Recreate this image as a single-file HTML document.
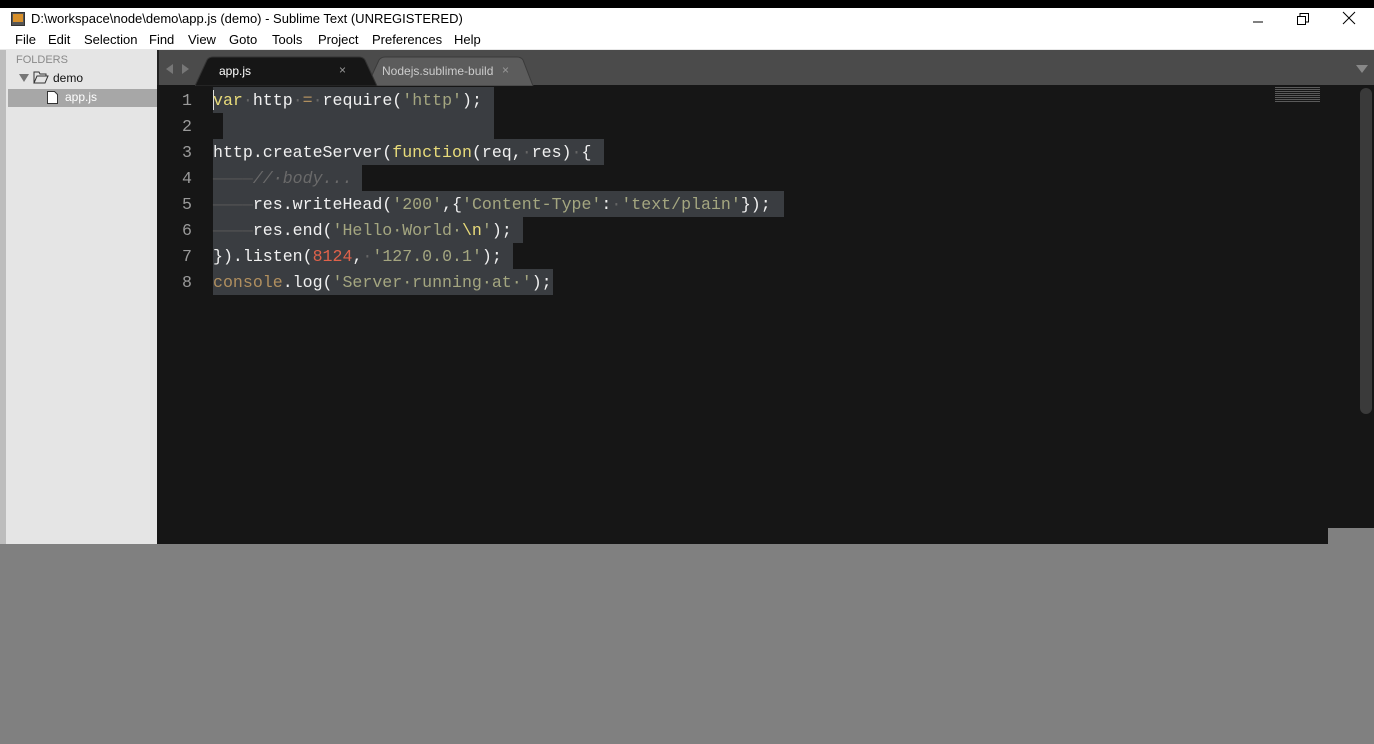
<!DOCTYPE html>
<html><head><meta charset="utf-8"><style>
*{margin:0;padding:0;box-sizing:border-box}
body{width:1374px;height:744px;background:#808080;position:relative;overflow:hidden;font-family:"Liberation Sans",sans-serif}
.abs{position:absolute}
#top{left:0;top:0;width:1374px;height:8px;background:#000}
#title{left:0;top:8px;width:1374px;height:22px;background:#fff;font-size:13px;color:#000;line-height:22px}
#menu{left:0;top:30px;width:1374px;height:20px;background:#fff;font-size:13px;line-height:20px;border-bottom:1px solid #e8e8e8}
#menu span{position:absolute;top:0}
#side{left:0;top:50px;width:157px;height:494px;background:#e5e5e5}
#strip{left:0;top:50px;width:6px;height:494px;background:#bdbdbd}
#ed{left:157px;top:50px;width:1217px;height:494px;background:#161616}
#tabbar{left:157px;top:50px;width:1217px;height:35px;background:#4b4b4b;border-left:2px solid #222}
.code{font-family:"Liberation Mono",monospace;font-size:16.6px;color:#f0f0f0;white-space:pre;line-height:26px}
.ln{color:#9a9a9a;width:40px;text-align:right;left:152px}
.sel{background:#3a3d41;height:26px}
.s{color:#a4a680}.k{color:#e8db7a}.n{color:#e0624a}.c{color:#6a6a6a;font-style:italic}.o{color:#b08f5f}.d{color:#666}.ig{color:#555}
</style></head><body>
<div id="top" class="abs"></div>
<div id="title" class="abs">
 <svg class="abs" style="left:11px;top:4px" width="14" height="14"><rect x="0.5" y="0.5" width="13" height="13" fill="#555" stroke="#333"/><rect x="2" y="2" width="10" height="8" fill="#d8902a"/></svg>
 <span class="abs" style="left:31px">D:\workspace\node\demo\app.js (demo) - Sublime Text (UNREGISTERED)</span>
 <svg class="abs" style="left:1252px;top:4px" width="12" height="14"><line x1="1" y1="10" x2="11" y2="10" stroke="#000"/></svg>
 <svg class="abs" style="left:1296px;top:4px" width="14" height="14"><rect x="1.5" y="4.5" width="8" height="8" fill="none" stroke="#000"/><path d="M4 4V1.5h8.5V10H10" fill="none" stroke="#000"/></svg>
 <svg class="abs" style="left:1342px;top:3px" width="14" height="14"><path d="M1 1L13 13M13 1L1 13" stroke="#000"/></svg>
</div>
<div id="menu" class="abs">
 <span style="left:15px">File</span><span style="left:48px">Edit</span><span style="left:84px">Selection</span><span style="left:149px">Find</span><span style="left:188px">View</span><span style="left:229px">Goto</span><span style="left:272px">Tools</span><span style="left:318px">Project</span><span style="left:372px">Preferences</span><span style="left:454px">Help</span>
</div>
<div id="side" class="abs"></div>
<div id="strip" class="abs"></div>
<div class="abs" style="left:16px;top:54px;font-size:11px;color:#8a8a8a">FOLDERS</div>
<div class="abs" style="left:19px;top:74px;width:0;height:0;border-left:5px solid transparent;border-right:5px solid transparent;border-top:8px solid #777"></div>
<svg class="abs" style="left:33px;top:71px" width="16" height="13"><path d="M1 1h5l1 2h6v2H4L1 12zM1 12l3-7h11l-3 7z" fill="none" stroke="#333"/></svg>
<div class="abs" style="left:53px;top:71px;font-size:12px;color:#111">demo</div>
<div class="abs" style="left:8px;top:89px;width:149px;height:18px;background:#a7a7a7"></div>
<svg class="abs" style="left:47px;top:91px" width="11" height="13"><path d="M0.5 0.5h7l3 3v9h-10z" fill="#fff" stroke="#333"/></svg>
<div class="abs" style="left:65px;top:90px;font-size:12px;color:#fff">app.js</div>
<div id="ed" class="abs"></div>
<div id="tabbar" class="abs"></div>
<div class="abs" style="left:166px;top:64px;width:0;height:0;border-top:5px solid transparent;border-bottom:5px solid transparent;border-right:7px solid #777"></div>
<div class="abs" style="left:182px;top:64px;width:0;height:0;border-top:5px solid transparent;border-bottom:5px solid transparent;border-left:7px solid #777"></div>
<div class="abs" style="left:1356px;top:65px;width:0;height:0;border-left:6px solid transparent;border-right:6px solid transparent;border-top:8px solid #888"></div>
<svg class="abs" style="left:195px;top:56px" width="340" height="30">
 <path d="M172 30L184 4Q186 1 190 1H322Q326 1 328 4L338 30Z" fill="#5c5c5c" stroke="#3a3a3a"/>
 <path d="M0 30L12 4Q14 1 18 1H164Q168 1 170 4L182 30Z" fill="#161616" stroke="#333"/>
</svg>
<div class="abs" style="left:219px;top:64px;font-size:12px;color:#fff">app.js</div>
<div class="abs" style="left:339px;top:63px;font-size:12px;color:#999">×</div>
<div class="abs" style="left:382px;top:64px;font-size:12px;color:#ccc">Nodejs.sublime-build</div>
<div class="abs" style="left:502px;top:63px;font-size:12px;color:#999">×</div>
<div class="abs sel" style="left:213px;top:87px;width:281px"></div>
<div class="abs sel" style="left:223px;top:113px;width:271px"></div>
<div class="abs sel" style="left:213px;top:139px;width:391px"></div>
<div class="abs sel" style="left:213px;top:165px;width:149px"></div>
<div class="abs sel" style="left:213px;top:191px;width:571px"></div>
<div class="abs sel" style="left:213px;top:217px;width:310px"></div>
<div class="abs sel" style="left:213px;top:243px;width:300px"></div>
<div class="abs sel" style="left:213px;top:269px;width:340px"></div>
<div class="abs" style="left:213px;top:90px;width:1px;height:20px;background:#ddd"></div>
<div class="abs code ln" style="top:88px">1
2
3
4
5
6
7
8</div>
<div class="abs code" style="left:213px;top:88px"><span class="k">var</span><span class="d">·</span>http<span class="d">·</span><span class="o">=</span><span class="d">·</span>require(<span class="s">'http'</span>);

http.createServer(<span class="k">function</span>(req,<span class="d">·</span>res)<span class="d">·</span>{
<span class="ig">――――</span><span class="c">//·body...</span>
<span class="ig">――――</span>res.writeHead(<span class="s">'200'</span>,{<span class="s">'Content-Type'</span>:<span class="d">·</span><span class="s">'text/plain'</span>});
<span class="ig">――――</span>res.end(<span class="s">'Hello·World·</span><span class="k">\n</span><span class="s">'</span>);
}).listen(<span class="n">8124</span>,<span class="d">·</span><span class="s">'127.0.0.1'</span>);
<span class="o">console</span>.log(<span class="s">'Server·running·at·'</span>);</div>
<div class="abs" style="left:1275px;top:87px;width:45px;height:16px;background:repeating-linear-gradient(#888 0 1px,transparent 1px 2px);opacity:.6"></div>
<div class="abs" style="left:1360px;top:88px;width:12px;height:326px;background:#3a3a3a;border-radius:6px"></div>
<div class="abs" style="left:1328px;top:528px;width:46px;height:16px;background:#808080"></div>
</body></html>
